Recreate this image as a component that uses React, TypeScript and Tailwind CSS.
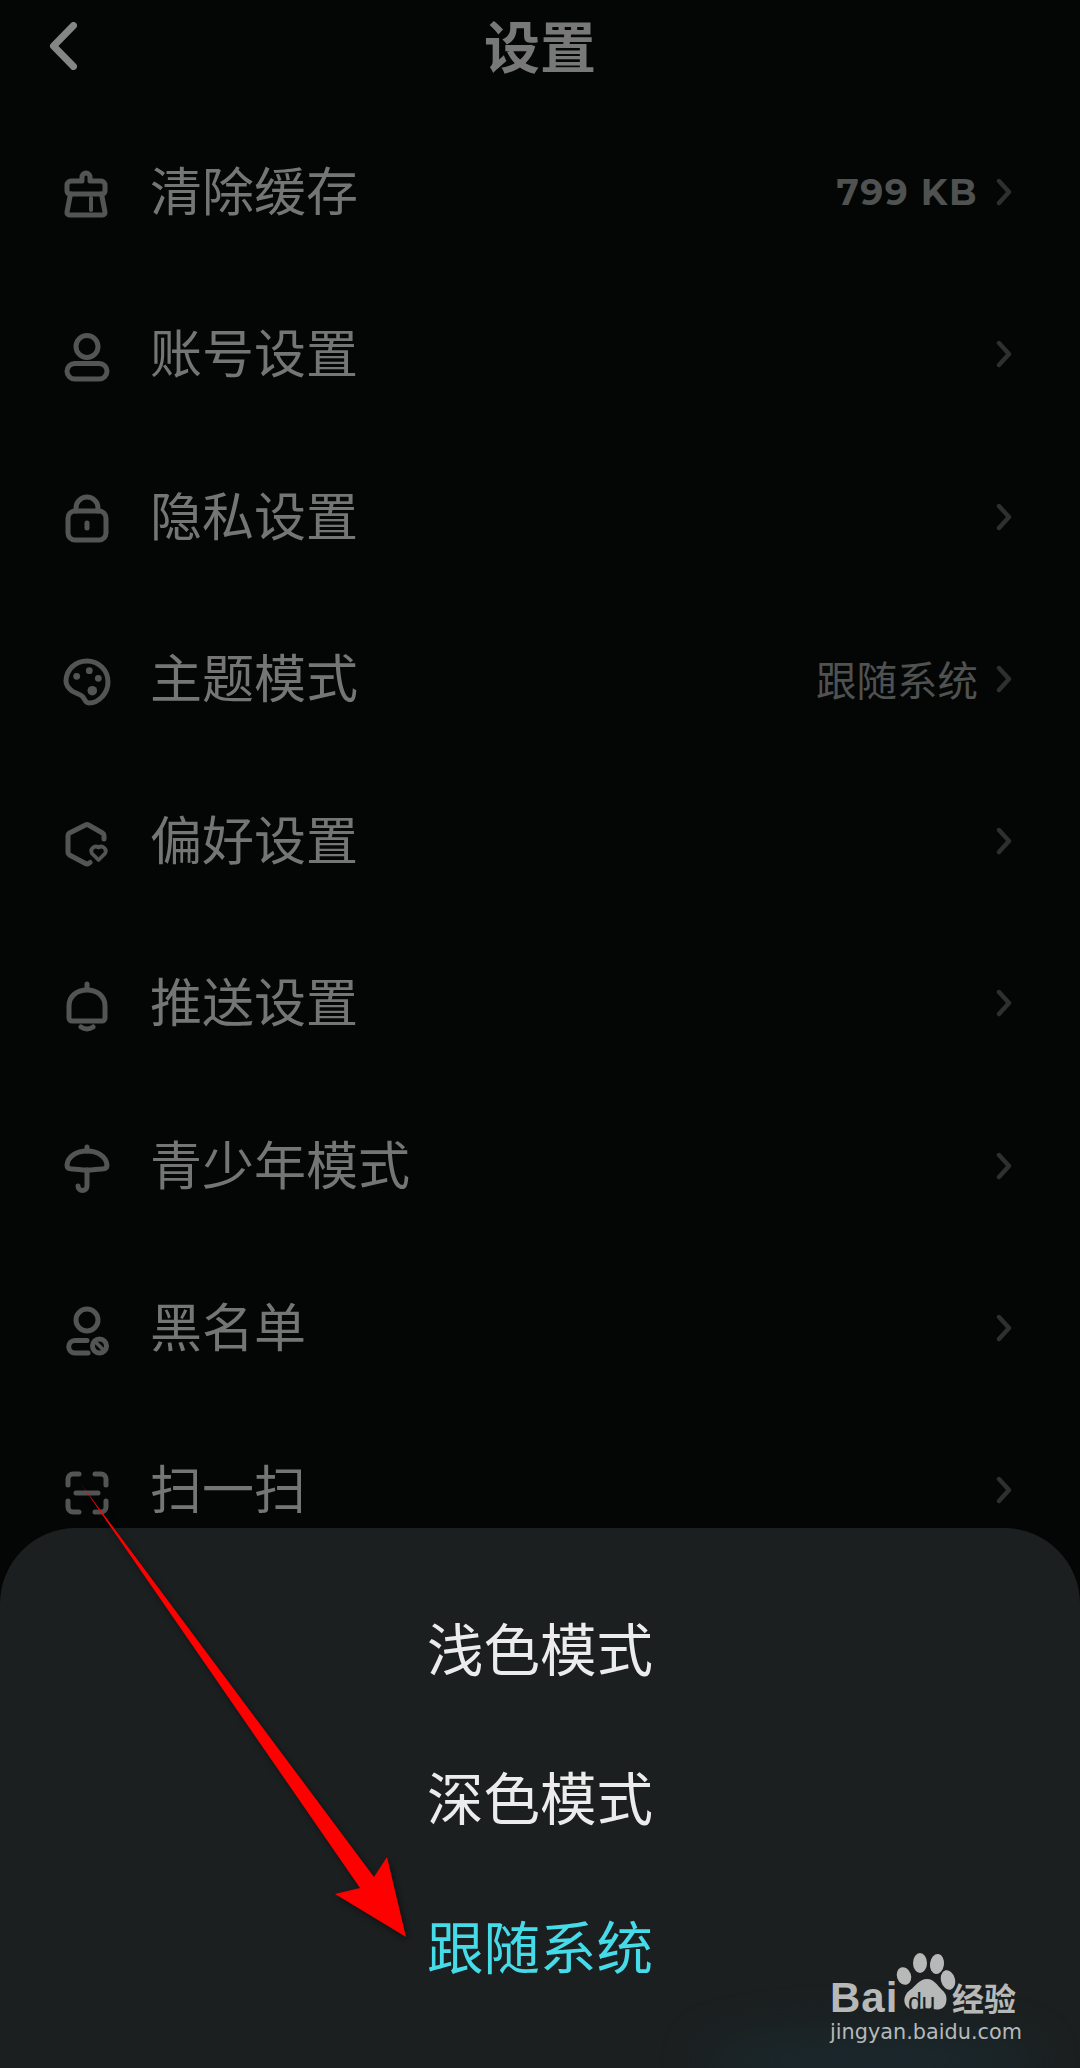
import React from "react";

const cjk = "font-['Noto_Sans_CJK_SC','Noto_Sans',sans-serif]";

const Icon = ({ children }: { children: React.ReactNode }) => (
  <svg
    viewBox="0 0 48 48"
    className="w-12 h-12 mt-[6px] shrink-0 overflow-visible text-[#525554]"
    fill="none"
    stroke="currentColor"
    strokeWidth={5}
    strokeLinecap="round"
    strokeLinejoin="round"
  >
    {children}
  </svg>
);

const Chevron = () => (
  <svg viewBox="0 0 16 28" className="w-4 h-7 ml-[18px] shrink-0" fill="none" stroke="#2e3030" strokeWidth={4.4} strokeLinecap="round" strokeLinejoin="round">
    <path d="M3 3l10 11L3 25" />
  </svg>
);

const rows: { label: string; icon: React.ReactNode; value?: React.ReactNode }[] = [
  {
    label: "清除缓存",
    value: <span className="font-['Montserrat','Inter',sans-serif] text-[36px] font-bold tracking-[1.5px] text-[#4f5251]">799 KB</span>,
    icon: (
      <>
        <path d="M19 10V6a4 4 0 0 1 8 0v4h11a4 4 0 0 1 4 4v6a3 3 0 0 1-3 3H7a3 3 0 0 1-3-3v-6a4 4 0 0 1 4-4z" />
        <path d="M7.500 23L4 41a2.500 2.500 0 0 0 2.500 3H39.500a2.500 2.500 0 0 0 2.500-3L38.500 23" />
        <path d="M28 27v12" strokeWidth={4} />
      </>
    ),
  },
  {
    label: "账号设置",
    icon: (
      <>
        <circle cx="24" cy="13.500" r="11" />
        <rect x="4" y="30.500" width="40" height="15.500" rx="7.750" />
      </>
    ),
  },
  {
    label: "隐私设置",
    icon: (
      <>
        <rect x="5" y="15" width="38" height="29" rx="7" />
        <path d="M13 15v-3a11 11 0 0 1 22 0v3M24 27v5" />
      </>
    ),
  },
  {
    label: "主题模式",
    value: <span className={`${cjk} text-[40.500px] text-[#4f5251]`}>跟随系统</span>,
    icon: (
      <>
        <path d="M24 3c11.500 0 21 9 21 21 0 11-9 21-19 21-4 0-4-4-6.500-6.500S13 35.500 9 33c-4-3-6-6-6-10C3 12 12 3 24 3z" />
        <g fill="currentColor" stroke="none">
          <circle cx="13.700" cy="18.300" r="3.400" />
          <circle cx="26.300" cy="12.700" r="3.400" />
          <circle cx="35.300" cy="20.300" r="3.400" />
          <circle cx="29.300" cy="32.700" r="4.800" />
        </g>
      </>
    ),
  },
  {
    label: "偏好设置",
    icon: (
      <>
        <path d="M41 19v-3.500a3 3 0 0 0-1.500-2.500L25.500 5a3 3 0 0 0-3 0L6.500 13A3 3 0 0 0 5 15.500v17A3 3 0 0 0 6.500 35l16 8.500a3 3 0 0 0 3 0l1.500-1" />
        <path d="M35.500 40l-6.500-6.500a4.500 4.500 0 0 1 6.500-6 4.500 4.500 0 0 1 6.500 6z" strokeWidth={3.800} />
      </>
    ),
  },
  {
    label: "推送设置",
    icon: (
      <>
        <path d="M9 39a3 3 0 0 1-3-3V24C6 14 14 8 24 8s18 6 18 16v12a3 3 0 0 1-3 3z" />
        <path d="M24 2v5M18 45q6 4 12 0" />
      </>
    ),
  },
  {
    label: "青少年模式",
    icon: (
      <>
        <path d="M4 20C5 11 14 6 24 6s19 5 20 14c0 3-2 4-5 4-5 0-9 1-15 1s-10-1-15-1c-3 0-5-1-5-4z" />
        <path d="M24 2v4M24 25v16a4.500 4.500 0 0 1-9 0" />
      </>
    ),
  },
  {
    label: "黑名单",
    icon: (
      <>
        <circle cx="24" cy="13" r="11" />
        <path d="M24 33.500H12a6.300 6.300 0 0 0 0 12.600h13" />
        <circle cx="36.500" cy="39" r="7" />
        <path d="M33 35.500l7 7" strokeWidth={3.600} />
      </>
    ),
  },
  {
    label: "扫一扫",
    icon: (
      <>
        <path d="M5 16v-6a5 5 0 0 1 5-5h6M32 5h6a5 5 0 0 1 5 5v6M43 32v6a5 5 0 0 1-5 5h-6M16 43h-6a5 5 0 0 1-5-5v-6M13 24h22" />
      </>
    ),
  },
];

export default function App() {
  return (
    <div className={`relative w-[1080px] h-[2068px] overflow-hidden bg-[#040606] ${cjk}`}>
      <header className="relative h-[111px] flex items-start justify-center pt-[5px]">
        <svg viewBox="0 0 28 48" className="absolute left-[49px] top-[22px] w-7 h-12" fill="none" stroke="#858585" strokeWidth={7} strokeLinecap="round" strokeLinejoin="round">
          <path d="M24.500 3.500L4.500 24l20 20.500" />
        </svg>
        <h1 className="text-[56px] leading-[78px] font-bold text-[#787878]">设置</h1>
      </header>

      <ul className="flex flex-col">
        {rows.map((r) => (
          <li key={r.label} className="h-[162.250px] flex items-center pl-[63px] pr-[68px]">
            <Icon>{r.icon}</Icon>
            <span className="ml-[39px] mb-[6px] text-[52px] text-[#757575]">{r.label}</span>
            <span className="ml-auto">{r.value}</span>
            <Chevron />
          </li>
        ))}
      </ul>

      {/* bottom sheet */}
      <div className="absolute left-0 right-0 top-[1528px] bottom-0 rounded-t-[76px] bg-[#1b1f1f] flex flex-col items-center pt-[44px]">
        <div className="h-[149px] text-[56.500px] leading-[149px] text-[#ececec]">浅色模式</div>
        <div className="h-[149px] text-[56.500px] leading-[149px] text-[#ececec]">深色模式</div>
        <div className="h-[149px] text-[56.500px] leading-[149px] text-[#45dbe8]">跟随系统</div>
      </div>

      {/* faint glow at the bottom edge */}
      <div className="absolute left-[700px] top-[2030px] w-[340px] h-[60px] rounded-[50%] bg-[#1a2c33] blur-[22px] opacity-70" />

      {/* annotation arrow */}
      <svg viewBox="0 0 1080 2068" className="absolute inset-0 w-[1080px] h-[2068px] pointer-events-none drop-shadow-[2px_3px_3px_rgba(0,0,0,0.45)]">
        <polygon points="81,1484 374,1877 387,1857 406,1937 335,1894 360,1888" fill="#ff0000" />
      </svg>

      {/* watermark */}
      <div className="absolute left-[830px] top-[1952px] w-[200px] h-[100px] text-[#b6b9b8]">
        <span className="absolute left-0 top-[24px] font-['Liberation_Sans',sans-serif] font-bold text-[42px] leading-[44px] tracking-[1px]">Bai</span>
        <svg viewBox="0 0 60 62" className="absolute left-[64px] top-0 w-[62px] h-[62px]" fill="currentColor">
          <ellipse cx="9" cy="24" rx="7" ry="9" transform="rotate(-20 9 24)" />
          <ellipse cx="25" cy="11" rx="7" ry="10" />
          <ellipse cx="42" cy="12" rx="7" ry="10" transform="rotate(8 42 12)" />
          <ellipse cx="53" cy="28" rx="7" ry="10" transform="rotate(-15 53 28)" />
          <path d="M32 27c7 0 10 6 15 11 5 4 5 9 4 13-2 7-9 7-13 6-4-1-9-1-13 0-5 1-12 2-15-5-2-6 1-11 5-14 6-4 9-11 17-11z" />
        </svg>
        <span className="absolute left-[78px] top-[37px] font-['Liberation_Sans',sans-serif] text-[25px] leading-[26px] tracking-[-0.5px] text-[#1b1f1f]">du</span>
        <span className="absolute left-[122px] top-[22px] text-[32px] leading-[46px] font-bold">经验</span>
        <span className="absolute left-0 top-[66px] font-['DejaVu_Sans',sans-serif] text-[20.800px] leading-[28px] whitespace-nowrap">jingyan.baidu.com</span>
      </div>
    </div>
  );
}
